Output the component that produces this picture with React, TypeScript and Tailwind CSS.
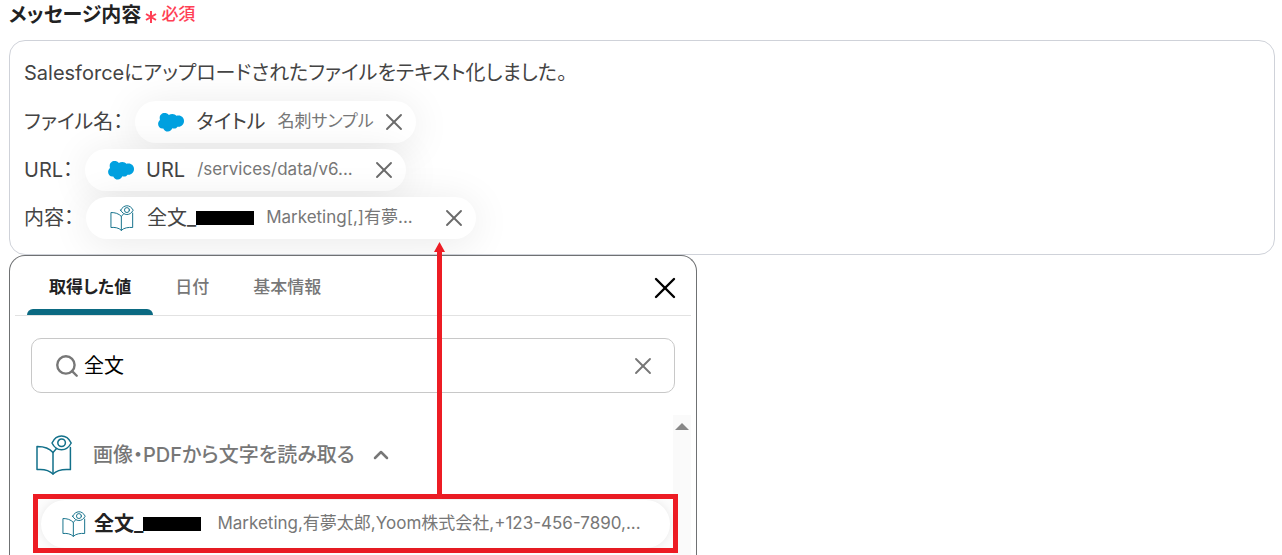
import React from 'react';
import { ChevronUp, Search, X } from 'lucide-react';

const SalesforceIcon = () => (
    <svg viewBox="0 0 26 19" className="w-[26px] h-[19px] shrink-0" fill="#00a1e0" aria-hidden="true">
        <path d="M10.8 1.9C11.8 1.2 13.1 .9 14.4 .9C16.1 .9 17.5 1.6 18.3 2.8C19 2.6 19.8 2.5 20.6 2.5C23.6 2.5 26 4.9 26 8S23.6 13.8 20.6 13.8C20.2 13.8 19.8 13.8 19.5 13.7C18.8 14.9 17.5 15.6 16 15.6C15.4 15.6 14.8 15.5 14.3 15.3C13.6 17.1 11.9 18.6 9.9 18.6C7.8 18.6 6 17.2 5.3 15.4C5 15.5 4.7 15.5 4.4 15.5C2 15.5 .1 13.4 .1 10.9C.1 9.3 .9 7.8 2 7C1.8 6.3 1.7 5.6 1.7 4.8C1.7 2.2 3.9 .1 6.5 .1C8.2 .1 9.9 .7 10.8 1.9Z" />
    </svg>
);

const BookIcon = ({ className }: { className: string }) => (
    <svg viewBox="0 0 36 40" className={className} fill="none" stroke="#12708a" strokeWidth="1.5" strokeLinejoin="round" strokeLinecap="round" aria-hidden="true">
        <path d="M17 17.5C13 13 7 11.5 1 11.6V34.6C7 34 13 35 17 39C21 35 28 34 34.4 34.6V12.4" />
        <path d="M17 39V17.5L20.5 13.6" />
        <path d="M16 8C20.5-1.2 30.5-1.2 35.2 8C30.5 17 20.5 17 16 8Z" />
        <circle cx="25.6" cy="7.8" r="3.8" />
    </svg>
);

const Redacted = () => <span className="inline-block w-[58px] h-[14px] bg-black align-baseline" />;

interface ChipProps {
    icon: React.ReactNode;
    name: React.ReactNode;
    value: string;
    width: string;
    label: string;
}

const Chip: React.FC<ChipProps> = ({ icon, name, value, width, label }) => (
    <span className={`inline-flex items-center h-[42px] pl-[23px] pr-2 rounded-full bg-white shadow-[0_4px_40px_rgba(0,0,0,0.09)] ${width}`}>
        <span className="flex w-[26px] mr-3 justify-center">{icon}</span>
        <span className="mr-3">{name}</span>
        <span className="flex-1 text-[17px] text-[#777] whitespace-nowrap">{value}</span>
        <button type="button" aria-label={label} className="text-[#6b6b6b]">
            <X size={28} strokeWidth={1.6} />
        </button>
    </span>
);

const tabs = ['取得した値', '日付', '基本情報'];

export default function App() {
    return (
        <main className="pl-[9px] pr-[7px] overflow-hidden bg-white text-[#444] text-[20px] font-['Inter','Noto_Sans_CJK_JP',sans-serif] [font-feature-settings:'palt']">
            <h2 className="flex items-center h-[30px] mb-[10px] text-[#222]">
                <span className="font-semibold">メッセージ内容</span>
                <span className="ml-1 flex items-center gap-1 text-[17px] font-medium text-[#ff3f55]">
                    <svg viewBox="0 0 12 14" className="w-3 h-[14px] mt-[3px]" stroke="currentColor" strokeWidth="2" aria-hidden="true">
                        <path d="M6 1V13M1 4L11 10M11 4L1 10" />
                    </svg>
                    必須
                </span>
            </h2>

            {/* Message editor */}
            <section className="border border-[#cfd2d9] rounded-2xl pt-2 pb-3 pl-[14px] pr-4">
                <p className="h-[49px] leading-[48px]">Salesforceにアップロードされたファイルをテキスト化しました。</p>
                <div className="flex items-center h-12 gap-3">
                    <span>ファイル名：</span>
                    <Chip icon={<SalesforceIcon />} name="タイトル" value="名刺サンプル" width="w-[281px]" label="タイトルを削除" />
                </div>
                <div className="flex items-center h-12 gap-3">
                    <span>URL：</span>
                    <Chip icon={<SalesforceIcon />} name="URL" value="/services/data/v6..." width="w-[321px]" label="URLを削除" />
                </div>
                <div className="flex items-center h-12 gap-3">
                    <span>内容：</span>
                    <Chip icon={<BookIcon className="w-6 h-[26px]" />} name={<>全文_<Redacted /></>} value="Marketing[,]有夢..." width="w-[390px]" label="全文を削除" />
                </div>
            </section>

            {/* Value picker */}
            <section className="relative w-full max-w-[688px] border border-b-0 border-[#6f7173] rounded-t-2xl bg-white px-[5px]">
                <div className="flex items-center h-[60px] border-b border-[#e2e2e2] pl-3 pr-2">
                    <div role="tablist" className="flex h-full flex-1 text-[17px] font-medium">
                        {tabs.map((tab, i) => (
                            <button
                                key={tab}
                                role="tab"
                                type="button"
                                aria-selected={i === 0}
                                className={`relative h-full px-[22px] pt-1 ${i === 0 ? 'font-semibold text-[#222]' : 'text-[#777]'}`}
                            >
                                {tab}
                                {i === 0 && <span className="absolute inset-x-0 bottom-0 h-[6px] rounded-t-md bg-[#0b6a82]" />}
                            </button>
                        ))}
                    </div>
                    <button type="button" aria-label="閉じる" className="mt-1 text-black">
                        <X size={36} strokeWidth={1.6} />
                    </button>
                </div>

                <label className="flex items-center h-[55px] mt-[22px] mx-4 pl-[22px] pr-[17px] border border-[#c8c8c8] rounded-[10px]">
                    <Search size={26} strokeWidth={2.2} className="text-[#777]" />
                    <input aria-label="検索" defaultValue="全文" className="flex-1 min-w-0 ml-1 text-black outline-none" />
                    <button type="button" aria-label="クリア" className="text-[#777]">
                        <X size={28} strokeWidth={1.6} />
                    </button>
                </label>

                <div className="flex mt-[22px]">
                    <div className="flex-1 min-w-0 pl-[18px]">
                        <button type="button" className="flex items-center h-[79px] pl-[3px] font-medium text-[#777]">
                            <BookIcon className="w-9 h-10" />
                            <span className="ml-[21px] mr-[14px]">画像・PDFから文字を読み取る</span>
                            <ChevronUp size={24} strokeWidth={2.5} />
                        </button>
                        <div className="relative z-10 -mr-[5px] h-[59px] mb-[2px] px-[3px] border-[5px] border-[#ed1c24] bg-[#fcfcfc] flex items-center">
                            <button type="button" className="flex flex-1 h-12 items-center pl-[21px] rounded-full bg-white shadow-[0_0_8px_rgba(0,0,0,0.08)]">
                                <BookIcon className="w-6 h-[26px]" />
                                <span className="ml-2 mr-4 font-semibold text-[#222]">全文_<Redacted /></span>
                                <span className="text-[17px] text-[#777]">Marketing,有夢太郎,Yoom株式会社,+123-456-7890,...</span>
                            </button>
                            {/* Arrow up to the inserted chip */}
                            <svg viewBox="0 0 11 257" className="absolute left-[396px] bottom-[49px] w-[11px] h-[257px]" fill="#ed1c24" aria-hidden="true">
                                <path d="M5.5 0L11 10H8V257H3V10H0Z" />
                            </svg>
                        </div>
                    </div>
                    <div className="w-[18px] bg-[#fafafa] pt-2 flex justify-center">
                        <svg viewBox="0 0 14 7" className="w-[14px] h-[7px]" fill="#888" aria-hidden="true">
                            <path d="M7 0L14 7H0Z" />
                        </svg>
                    </div>
                </div>
            </section>
        </main>
    );
}
